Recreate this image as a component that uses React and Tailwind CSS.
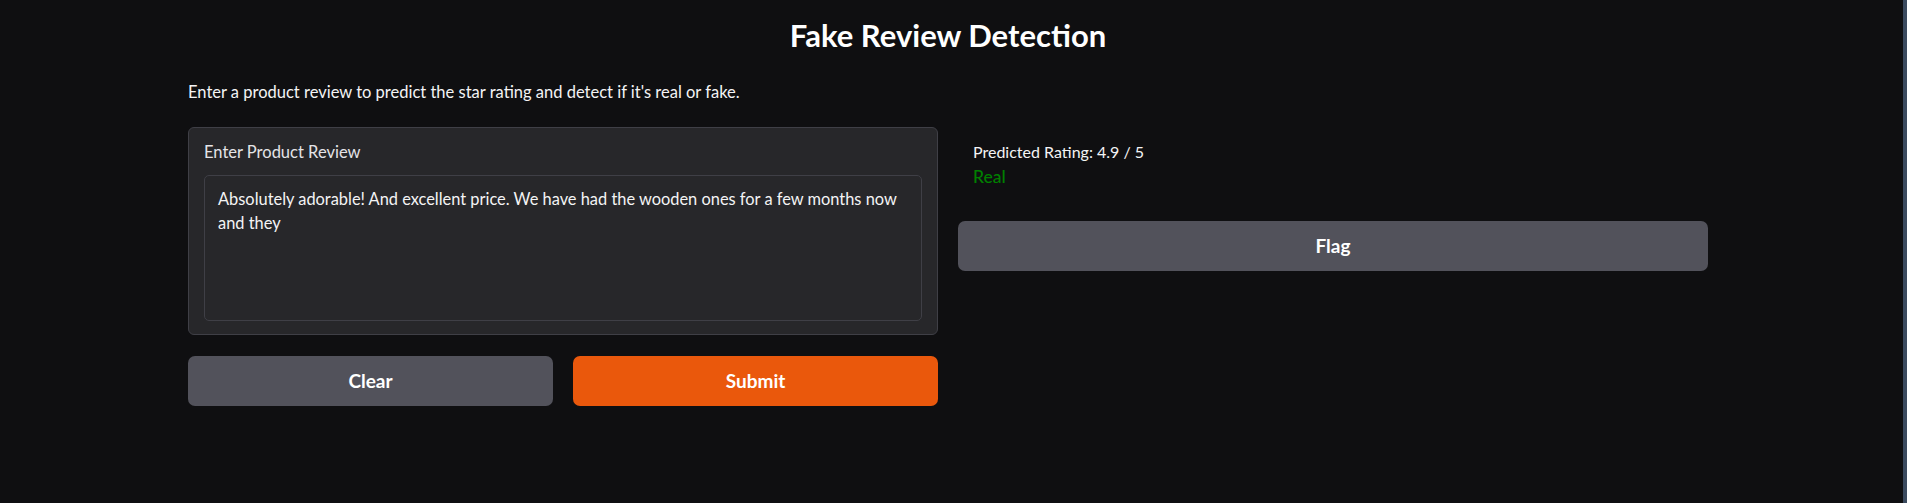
import { useState } from 'react'

// Gradio-style dark interface: review in, rating + verdict out
export default function App() {
  const [review, setReview] = useState(
    'Absolutely adorable! And excellent price. We have had the wooden ones for a few months now and they'
  )

  return (
    <div
      className="min-h-[503px] w-full bg-[#0f0f11] border-r-4 border-[#3b4a5e] text-[#f4f4f5]"
      style={{ fontFamily: 'Lato, "Open Sans", sans-serif' }}
    >
      <div className="w-[1520px] ml-[188px] pt-[15px]">
        {/* Heading */}
        <h1 className="text-center text-[31px] leading-[40px] font-bold text-white">
          Fake Review Detection
        </h1>
        <p className="mt-[27px] text-[16.5px] leading-[20px] text-[#f4f4f5]">
          Enter a product review to predict the star rating and detect if it's real or fake.
        </p>

        <div className="mt-[25px] flex gap-[20px]">
          {/* Input column */}
          <div className="w-[750px] flex flex-col">
            <div className="h-[208px] rounded-[6px] border border-[#3f3f46] bg-[#27272a] px-[15px] pt-[14px]">
              <label className="block text-[16.5px] leading-[20px] text-[#e4e4e7]">
                Enter Product Review
              </label>
              <textarea
                value={review}
                onChange={e => setReview(e.target.value)}
                className="mt-[13px] h-[146px] w-full resize-none rounded-[5px] border border-[#3f3f46] bg-[#27272a] px-[13px] py-[11px] text-[16.4px] leading-[24px] text-[#f4f4f5] outline-none"
              />
            </div>
            <div className="mt-[21px] flex gap-[20px]">
              <button className="h-[50px] flex-1 rounded-[7px] bg-[#52525b] text-[19px] font-bold text-white">
                Clear
              </button>
              <button className="h-[50px] flex-1 rounded-[7px] bg-[#ea580c] text-[19px] font-bold text-white">
                Submit
              </button>
            </div>
          </div>

          {/* Output column */}
          <div className="w-[750px] flex flex-col">
            <div className="h-[94px] px-[15px] pt-[12px]">
              <p className="text-[16px] leading-[25px] text-[#f4f4f5]">Predicted Rating: 4.9 / 5</p>
              <p className="text-[17.5px] leading-[25px] font-medium text-[#008000]">Real</p>
            </div>
            <button className="h-[50px] w-full rounded-[7px] bg-[#52525b] text-[19px] font-bold text-white">
              Flag
            </button>
          </div>
        </div>
      </div>
    </div>
  )
}
